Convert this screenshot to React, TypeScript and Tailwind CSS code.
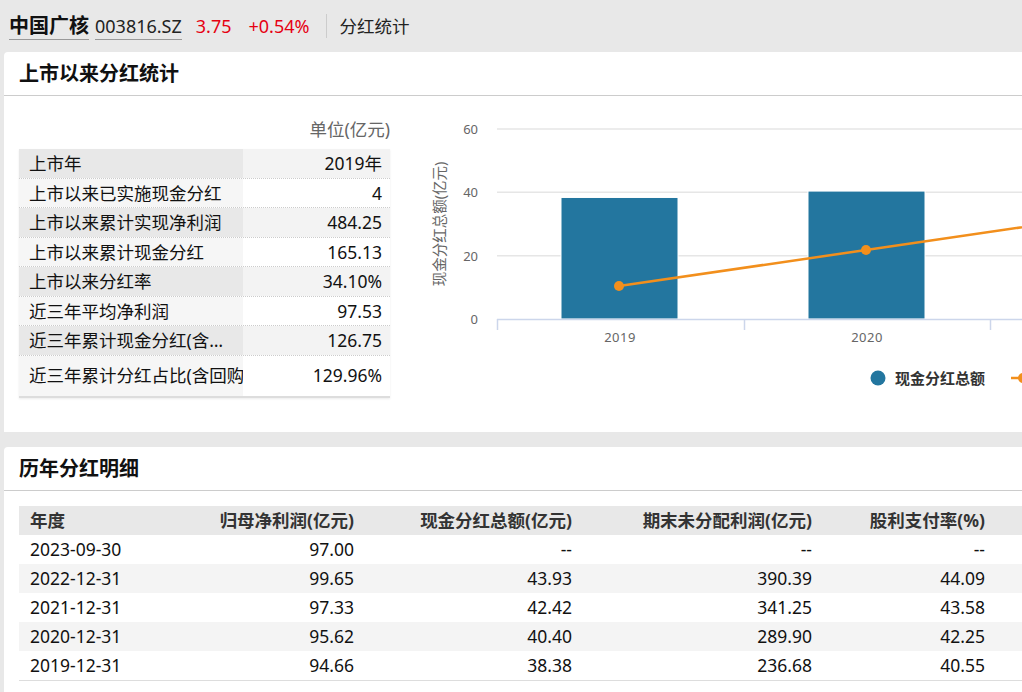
import React from 'react';

const summaryRows: { label: string; value: string; clip?: 'ellipsis' | 'cut' }[] = [
  { label: '上市年', value: '2019年' },
  { label: '上市以来已实施现金分红', value: '4' },
  { label: '上市以来累计实现净利润', value: '484.25' },
  { label: '上市以来累计现金分红', value: '165.13' },
  { label: '上市以来分红率', value: '34.10%' },
  { label: '近三年平均净利润', value: '97.53' },
  { label: '近三年累计现金分红(含回购)', value: '126.75', clip: 'ellipsis' },
  { label: '近三年累计分红占比(含回购)', value: '129.96%', clip: 'cut' },
];

const detailRows = [
  ['2023-09-30', '97.00', '--', '--', '--'],
  ['2022-12-31', '99.65', '43.93', '390.39', '44.09'],
  ['2021-12-31', '97.33', '42.42', '341.25', '43.58'],
  ['2020-12-31', '95.62', '40.40', '289.90', '42.25'],
  ['2019-12-31', '94.66', '38.38', '236.68', '40.55'],
];

// chart scale: 20 units = 63.33px, baseline at y=210
const yOf = (v: number) => 210 - v * 3.1667;

const DividendChart: React.FC = () => {
  const bars = [
    { x: 141, v: 38.38, label: '2019' },
    { x: 388, v: 40.4, label: '2020' },
  ];
  return (
    <svg width="602" height="300" className="shrink-0 block" style={{ fontFamily: '"Noto Sans", "Noto Sans CJK SC", sans-serif' }}>
      {[60, 40, 20].map((v) => (
        <line key={v} x1="77" x2="602" y1={yOf(v)} y2={yOf(v)} stroke="#e6e6e6" strokeWidth="1.5" />
      ))}
      {[60, 40, 20, 0].map((v) => (
        <text key={`l${v}`} x="58" y={yOf(v) + 5} textAnchor="end" fontSize="13" fill="#666">
          {v}
        </text>
      ))}
      <text
        x="0"
        y="0"
        transform="translate(25 115) rotate(-90)"
        textAnchor="middle"
        fontSize="14.5"
        fill="#666"
      >
        现金分红总额(亿元)
      </text>
      {bars.map((b) => (
        <rect key={b.label} x={b.x} y={yOf(b.v)} width="117" height={210 - yOf(b.v)} fill="#23769f" stroke="#fff" strokeWidth="1" />
      ))}
      <line x1="77" x2="602" y1="210.5" y2="210.5" stroke="#ccd6eb" strokeWidth="1.5" />
      {[77, 324, 570].map((x) => (
        <line key={`t${x}`} x1={x + 0.5} x2={x + 0.5} y1="210" y2="221" stroke="#ccd6eb" strokeWidth="1.5" />
      ))}
      {bars.map((b, i) => (
        <text key={`c${b.label}`} x={200 + i * 247} y="233" textAnchor="middle" fontSize="13" fill="#666" letterSpacing="0.5">
          {b.label}
        </text>
      ))}
      <polyline points="199,177 446,141 693,105" fill="none" stroke="#f28f1c" strokeWidth="2.5" />
      <circle cx="199" cy="177" r="5" fill="#f28f1c" />
      <circle cx="446" cy="141" r="5" fill="#f28f1c" />
      {/* legend */}
      <circle cx="458" cy="269" r="7.5" fill="#23769f" />
      <text x="475" y="275" fontSize="15" fontWeight="700" fill="#333">
        现金分红总额
      </text>
      <line x1="591" x2="615" y1="269" y2="269" stroke="#f28f1c" strokeWidth="2.5" />
      <circle cx="603" cy="269" r="5" fill="#f28f1c" />
    </svg>
  );
};

const colWidths = ['w-[181px]', 'w-[164px]', 'w-[218px]', 'w-[240px]', 'w-[173px]'];

export default function App() {
  return (
    <div
      className="w-[1022px] h-[692px] overflow-hidden bg-[#e8e8e8] text-[#111]"
      style={{ fontFamily: '"Noto Sans", "Noto Sans CJK SC", sans-serif' }}
    >
      {/* top bar */}
      <div className="h-[52px] flex items-center pl-[9px] whitespace-nowrap">
        <span className="text-[20px] font-bold text-[#111] leading-[24px] border-b border-[#999] pb-[1px] mt-[2px]">中国广核</span>
        <span className="ml-[6px] text-[18px] text-[#222] leading-[24px] border-b border-[#999] pb-[1px] mt-[2px]">003816.SZ</span>
        <span className="ml-[14px] text-[18px] text-[#e60012]">3.75</span>
        <span className="ml-[17px] text-[18px] text-[#e60012]">+0.54%</span>
        <span className="ml-[17px] w-px h-[24px] bg-[#ccc]" />
        <span className="ml-[12px] text-[17.5px] text-[#222]">分红统计</span>
      </div>

      {/* card 1 */}
      <div className="ml-[4px] w-[1100px] h-[380px] bg-white rounded-tl-[4px] overflow-hidden">
        <div className="h-[44px] border-b border-[#ccc] flex items-center pl-[15px] text-[20px] font-bold text-[#111]">
          上市以来分红统计
        </div>
        <div className="flex">
          <div className="ml-[15px] pt-[20px] w-[371px] shrink-0">
            <div className="h-[26px] leading-[26px] mb-[7px] text-right text-[17.5px] text-[#666]">单位(亿元)</div>
            <div className="border-b-2 border-[#ddd] shadow-[0_1px_2px_rgba(0,0,0,0.08)]">
              {summaryRows.map((r, i) => {
                const odd = i % 2 === 0;
                const last = i === summaryRows.length - 1;
                return (
                  <div
                    key={r.label}
                    className={`flex text-[17.5px] ${last ? 'h-[40px]' : 'h-[29.5px] border-b border-dotted border-[#ccc]'}`}
                  >
                    <div
                      className={`w-[224px] shrink-0 pl-[10px] flex items-center whitespace-nowrap overflow-hidden ${
                        odd ? 'bg-[#e8e8e8]' : 'bg-[#f6f6f6]'
                      }`}
                    >
                      {r.clip === 'ellipsis' ? (
                        <span className="block truncate pr-[14px]">{r.label}</span>
                      ) : (
                        <span className="block">{r.label}</span>
                      )}
                    </div>
                    <div
                      className={`flex-1 pr-[8px] flex items-center justify-end whitespace-nowrap ${
                        odd ? 'bg-[#f3f3f3]' : 'bg-white'
                      }`}
                    >
                      {r.value}
                    </div>
                  </div>
                );
              })}
            </div>
          </div>
          <div className="ml-[30px] mt-[13px]">
            <DividendChart />
          </div>
        </div>
      </div>

      {/* card 2 */}
      <div className="mt-[15px] ml-[4px] w-[1100px] h-[260px] bg-white rounded-tl-[4px] overflow-hidden">
        <div className="h-[44px] border-b border-[#ccc] flex items-center pl-[15px] text-[20px] font-bold text-[#111]">
          历年分红明细
        </div>
        <div className="ml-[15px] mt-[15px] w-[1060px] text-[17.5px]">
          <div className="flex h-[29px] items-center bg-[#e8e8e8] font-bold text-[#333]">
            {['年度', '归母净利润(亿元)', '现金分红总额(亿元)', '期末未分配利润(亿元)', '股利支付率(%)'].map((h, i) => (
              <div key={h} className={`${colWidths[i]} shrink-0 whitespace-nowrap ${i === 0 ? 'pl-[11px]' : 'text-right pr-[10px]'}`}>
                {h}
              </div>
            ))}
          </div>
          <div className="border-b border-[#ddd]">
            {detailRows.map((row, ri) => (
              <div key={row[0]} className={`flex h-[29px] items-center ${ri % 2 === 1 ? 'bg-[#f4f4f4]' : 'bg-white'}`}>
                {row.map((c, i) => (
                  <div key={i} className={`${colWidths[i]} shrink-0 whitespace-nowrap ${i === 0 ? 'pl-[11px]' : 'text-right pr-[10px]'}`}>
                    {c}
                  </div>
                ))}
              </div>
            ))}
          </div>
        </div>
      </div>
    </div>
  );
}
